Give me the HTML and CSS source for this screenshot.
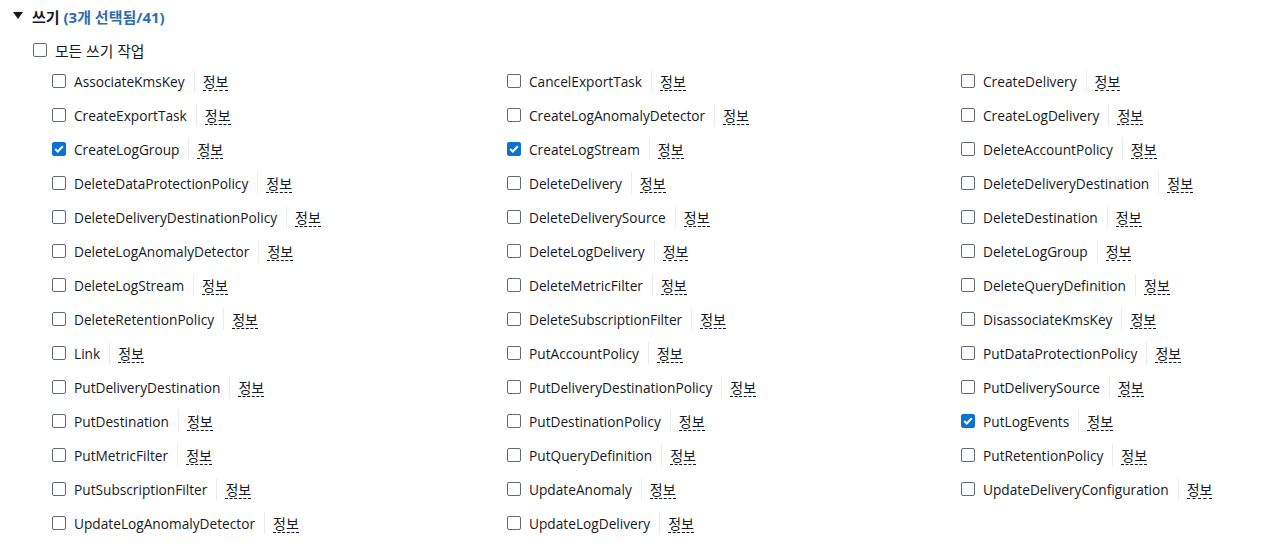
FILE: index.html
```html
<!DOCTYPE html>
<html lang="ko">
<head>
  <meta charset="UTF-8">
  <title>쓰기 권한</title>
  <link rel="stylesheet" href="styles.css">
</head>
<body>
  <div class="section">
    <div class="section-header">
      <svg class="caret" width="10" height="8" viewBox="0 0 10 8"><polygon points="0,0 10,0 5,7" fill="#16191f"/></svg>
      <span class="title">쓰기 <span class="count">(3개 선택됨/41)</span></span>
    </div>
    <label class="all-row">
      <span class="cb"></span>
      <span class="all-label ko">모든 쓰기 작업</span>
    </label>
    <div class="grid" id="grid"></div>
  </div>

  <script>
    const actions = [
      ['AssociateKmsKey', 0], ['CancelExportTask', 0], ['CreateDelivery', 0],
      ['CreateExportTask', 0], ['CreateLogAnomalyDetector', 0], ['CreateLogDelivery', 0],
      ['CreateLogGroup', 1], ['CreateLogStream', 1], ['DeleteAccountPolicy', 0],
      ['DeleteDataProtectionPolicy', 0], ['DeleteDelivery', 0], ['DeleteDeliveryDestination', 0],
      ['DeleteDeliveryDestinationPolicy', 0], ['DeleteDeliverySource', 0], ['DeleteDestination', 0],
      ['DeleteLogAnomalyDetector', 0], ['DeleteLogDelivery', 0], ['DeleteLogGroup', 0],
      ['DeleteLogStream', 0], ['DeleteMetricFilter', 0], ['DeleteQueryDefinition', 0],
      ['DeleteRetentionPolicy', 0], ['DeleteSubscriptionFilter', 0], ['DisassociateKmsKey', 0],
      ['Link', 0], ['PutAccountPolicy', 0], ['PutDataProtectionPolicy', 0],
      ['PutDeliveryDestination', 0], ['PutDeliveryDestinationPolicy', 0], ['PutDeliverySource', 0],
      ['PutDestination', 0], ['PutDestinationPolicy', 0], ['PutLogEvents', 1],
      ['PutMetricFilter', 0], ['PutQueryDefinition', 0], ['PutRetentionPolicy', 0],
      ['PutSubscriptionFilter', 0], ['UpdateAnomaly', 0], ['UpdateDeliveryConfiguration', 0],
      ['UpdateLogAnomalyDetector', 0], ['UpdateLogDelivery', 0]
    ];

    const grid = document.getElementById('grid');
    actions.forEach(function (a) {
      const item = document.createElement('div');
      item.className = 'item';
      item.innerHTML =
        '<span class="cb' + (a[1] ? ' checked' : '') + '">' +
        (a[1] ? '<svg width="10" height="8" viewBox="0 0 10 8"><polyline points="1.2,4 3.8,6.5 8.8,1.2" fill="none" stroke="#fff" stroke-width="2"/></svg>' : '') +
        '</span>' +
        '<span class="name">' + a[0] + '</span>' +
        '<span class="sep"></span>' +
        '<a class="info">정보</a>';
      grid.appendChild(item);
    });
  </script>
</body>
</html>
```
FILE: styles.css
```css
body {
  margin: 0;
  background: #fff;
  font-family: 'Open Sans', 'Noto Sans CJK KR', sans-serif;
  font-size: 13.7px;
  color: #16191f;
  overflow: hidden;
}

.ko {
  font-size: 14.8px;
}

.section {
  padding: 5px 0 0 13px;
}

.section-header {
  display: flex;
  align-items: center;
  height: 22px;
}

.caret {
  margin-right: 9px;
}

.title {
  font-weight: bold;
  font-size: 15px;
}

.count {
  color: #2c6db1;
}

.all-row {
  display: flex;
  align-items: center;
  height: 22px;
  margin: 12px 0 0 20px;
}

.all-label {
  margin-left: 8px;
}

.cb {
  box-sizing: border-box;
  width: 14px;
  height: 14px;
  border: 1.5px solid #5f6b7a;
  border-radius: 2px;
  display: inline-flex;
  align-items: center;
  justify-content: center;
  flex-shrink: 0;
}

.cb.checked {
  background: #0972d3;
  border-color: #0972d3;
}

.grid {
  display: grid;
  grid-template-columns: 455px 454px 1fr;
  margin: 3px 0 0 39px;
}

.item {
  display: flex;
  align-items: center;
  height: 34px;
}

.name {
  margin-left: 8px;
}

.sep {
  width: 1px;
  height: 22px;
  background: #e9ebed;
  margin: 0 8px 0 9px;
}

.info {
  font-size: 14px;
  color: #16191f;
  border-bottom: 1px dashed #16191f;
  line-height: 16px;
  margin-top: 3px;
}
```
